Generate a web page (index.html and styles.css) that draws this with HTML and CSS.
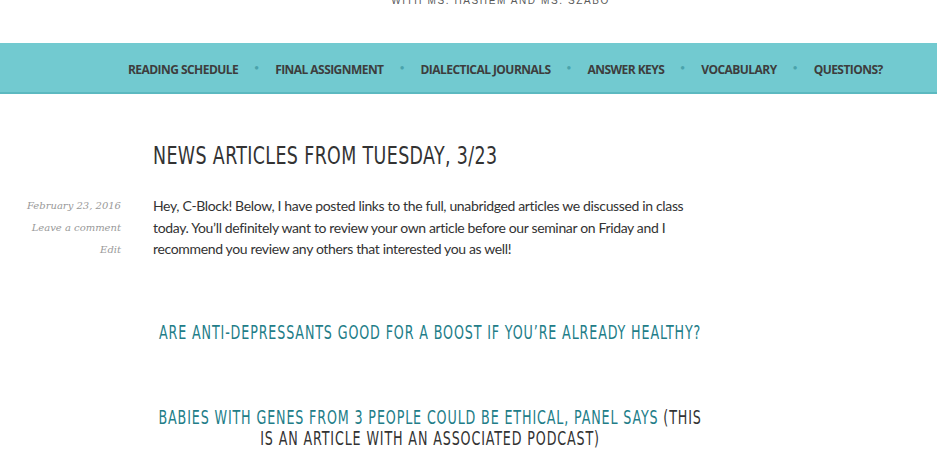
FILE: index.html
```html
<!DOCTYPE html>
<html>
<head>
<meta charset="utf-8">
<link rel="stylesheet" href="styles.css">
</head>
<body>
<header class="site-header">
  <p class="site-description">With Ms. Hashem and Ms. Szabo</p>
</header>
<nav class="main-nav">
  <ul class="menu">
    <li><a href="#">Reading Schedule</a></li>
    <li class="sep">&bull;</li>
    <li><a href="#">Final Assignment</a></li>
    <li class="sep">&bull;</li>
    <li><a href="#">Dialectical Journals</a></li>
    <li class="sep">&bull;</li>
    <li><a href="#">Answer Keys</a></li>
    <li class="sep">&bull;</li>
    <li><a href="#">Vocabulary</a></li>
    <li class="sep">&bull;</li>
    <li><a href="#">Questions?</a></li>
  </ul>
</nav>
<main class="content">
  <article class="post">
    <h1 class="entry-title">News Articles from Tuesday, 3/23</h1>
    <div class="entry">
      <aside class="entry-meta">
        <span>February 23, 2016</span>
        <span>Leave a comment</span>
        <span>Edit</span>
      </aside>
      <div class="entry-content">
        <p class="intro">Hey, C-Block! Below, I have posted links to the full, unabridged articles we discussed in class today. You’ll definitely want to review your own article before our seminar on Friday and I recommend you review any others that interested you as well!</p>
        <h2 class="article-link"><a href="#">Are Anti-Depressants Good for a Boost If You’re Already Healthy?</a></h2>
        <h2 class="article-link"><a href="#">Babies With Genes From 3 People Could Be Ethical, Panel Says</a> (This is an article with an associated podcast)</h2>
      </div>
    </div>
  </article>
</main>
</body>
</html>
```
FILE: styles.css
```css
* { box-sizing: border-box; }
html, body { margin: 0; padding: 0; background: #fff; }
body {
  font-family: "Source Sans Pro", Lato, "Open Sans", sans-serif;
  color: #333;
  overflow: hidden;
}
.site-header {
  height: 43px;
  position: relative;
  overflow: hidden;
}
.site-description {
  margin: 0;
  position: relative;
  top: -5px;
  text-align: center;
  font-family: "Liberation Sans", Arial, sans-serif;
  font-size: 10px;
  line-height: 12px;
  letter-spacing: 1.6px;
  text-transform: uppercase;
  color: #5a5a5a;
  padding-left: 64px;
}
.main-nav {
  background: #72cad0;
  border-bottom: 2px solid #5cb9c0;
  height: 51px;
}
.menu {
  list-style: none;
  margin: 0;
  padding: 0 0 0 128px;
  height: 49px;
  display: flex;
  align-items: center;
}
.menu li { white-space: nowrap; }
.menu li a {
  font-family: "Open Sans", sans-serif;
  font-weight: 700;
  font-size: 12px;
  text-transform: uppercase;
  color: #3d3d3d;
  text-decoration: none;
  letter-spacing: -0.55px;
}
.menu li.sep {
  color: #4aa3ab;
  font-size: 9px;
  width: 37px;
  text-align: center;
}
.content {
  padding-left: 30px;
}
.entry-title {
  margin: 47px 0 0 123px;
  width: 800px;
  font-family: "DejaVu Sans Condensed", "DejaVu Sans", sans-serif;
  font-weight: 400;
  font-size: 25px;
  line-height: 30px;
  letter-spacing: 0.5px;
  text-transform: uppercase;
  color: #333;
  transform: scaleX(0.775);
  transform-origin: left center;
}
.entry {
  display: grid;
  grid-template-columns: 91px 554px;
  column-gap: 32px;
  margin-top: 24px;
}
.entry-meta {
  display: flex;
  flex-direction: column;
  align-items: flex-end;
  white-space: nowrap;
  font-family: "DejaVu Serif", serif;
  font-style: italic;
  font-size: 10px;
  line-height: 22px;
  color: #999;
}
.intro {
  margin: 0;
  width: 545px;
  font-size: 14px;
  line-height: 21.5px;
  letter-spacing: -0.35px;
  color: #333;
}
.article-link {
  margin: 62px 0 0;
  width: 766px;
  text-align: center;
  font-family: "DejaVu Sans Condensed", "DejaVu Sans", sans-serif;
  font-weight: 400;
  font-size: 19.5px;
  line-height: 21px;
  letter-spacing: 1.2px;
  text-transform: uppercase;
  color: #333;
  transform: scaleX(0.7235);
  transform-origin: left top;
}
.article-link + .article-link { margin-top: 64px; }
.article-link a {
  color: #227d88;
  text-decoration: none;
}
```
